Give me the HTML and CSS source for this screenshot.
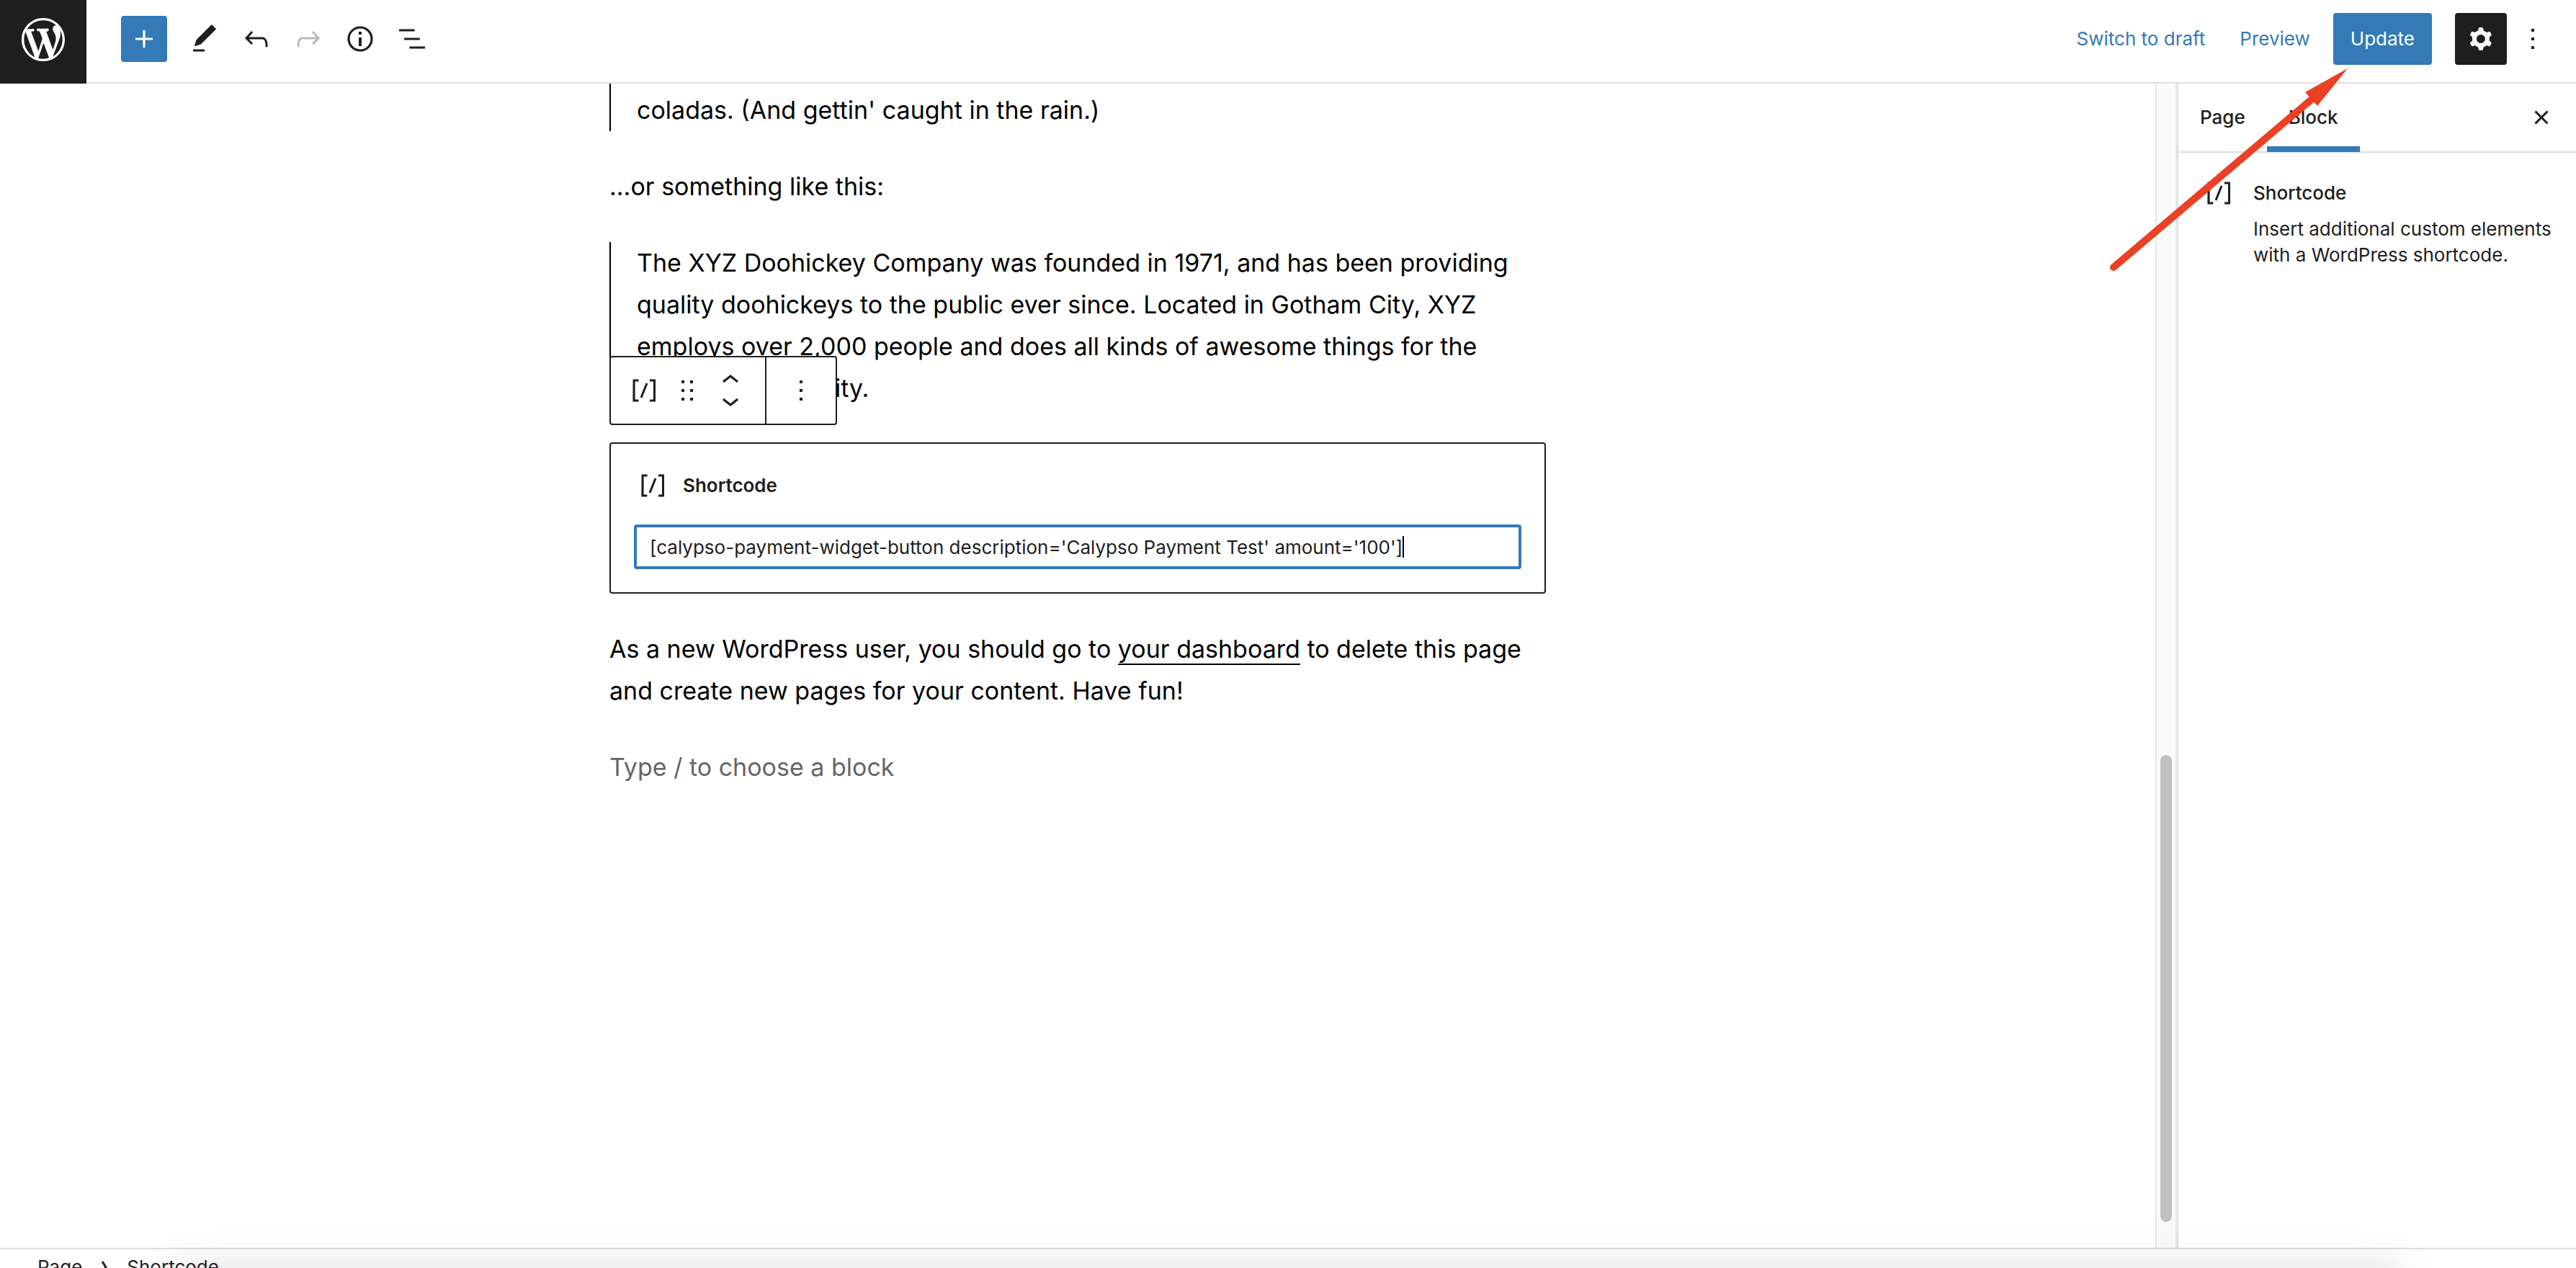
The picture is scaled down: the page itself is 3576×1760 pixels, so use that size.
FILE: index.html
```html
<!DOCTYPE html>
<html lang="en">
<head>
<meta charset="utf-8">
<title>Edit Page</title>
<link rel="stylesheet" href="styles.css">
</head>
<body>
<div class="app">
  <header class="header">
    <a class="logo" href="#" aria-label="View Pages"><svg class="logo-icon" viewBox="-2 -2 24 24"><path d="M20 10c0-5.51-4.49-10-10-10C4.48 0 0 4.49 0 10c0 5.52 4.48 10 10 10 5.51 0 10-4.48 10-10zM7.78 15.37L4.37 6.22c.55-.02 1.17-.08 1.17-.08.5-.06.44-1.13-.06-1.11 0 0-1.45.11-2.37.11-.18 0-.37 0-.58-.01C4.12 2.69 6.87 1.11 10 1.11c2.33 0 4.45.87 6.05 2.34-.68-.11-1.65.39-1.65 1.58 0 .74.45 1.36.9 2.1.35.61.55 1.36.55 2.46 0 1.49-1.4 5-1.4 5l-3.03-8.37c.54-.02.82-.17.82-.17.5-.05.44-1.25-.06-1.22 0 0-1.44.12-2.38.12-.87 0-2.33-.12-2.33-.12-.5-.03-.56 1.2-.06 1.22l.92.08 1.26 3.41zM17.41 10c.24-.64.74-1.87.43-4.25.7 1.29 1.05 2.71 1.05 4.25 0 3.29-1.73 6.24-4.4 7.78.97-2.59 1.94-5.2 2.92-7.78zM6.1 18.09C3.12 16.65 1.11 13.53 1.11 10c0-1.3.23-2.48.72-3.59C3.25 10.3 4.67 14.2 6.1 18.09zm4.03-6.63l2.58 6.98c-.86.29-1.76.45-2.71.45-.79 0-1.57-.11-2.29-.33.81-2.38 1.62-4.74 2.42-7.1z"/></svg></a>
    <div class="tools">
      <button class="icon-button inserter" aria-label="Add block"><svg class="icon" viewBox="0 0 24 24"><path d="M18 11.2h-5.2V6h-1.6v5.2H6v1.6h5.2V18h1.6v-5.2H18z"/></svg></button>
      <button class="icon-button" aria-label="Tools"><svg class="icon" viewBox="0 0 24 24"><path d="M20.1 5.1L16.9 2 6.2 12.7l-1.3 4.4 4.5-1.3L20.1 5.1zM4 20.8h8v-1.5H4v1.5z"/></svg></button>
      <button class="icon-button" aria-label="Undo"><svg class="icon" viewBox="0 0 24 24"><path d="M18.3 11.7c-.6-.6-1.4-.9-2.3-.9H6.7l2.9-3.3-1.1-1-4.5 5L8.5 16l1-1-2.7-2.7H16c.5 0 .9.2 1.3.5 1 1 1 3.4 1 4.5v.3h1.5v-.2c0-1.5 0-4.3-1.5-5.7z"/></svg></button>
      <button class="icon-button" aria-label="Redo" disabled><svg class="icon" viewBox="0 0 24 24"><path d="M15.6 6.5l-1.1 1 2.9 3.3H8c-.9 0-1.7.3-2.3.9-1.4 1.5-1.4 4.2-1.4 5.6v.2h1.5v-.3c0-1.1 0-3.5 1-4.5.3-.3.7-.5 1.3-.5h9.2L14.5 15l1.1 1.1 4.6-4.6-4.6-5z"/></svg></button>
      <button class="icon-button" aria-label="Details"><svg class="icon" viewBox="0 0 24 24"><path d="M12 3.2c-4.8 0-8.8 3.9-8.8 8.8 0 4.8 3.9 8.8 8.8 8.8 4.8 0 8.8-3.9 8.8-8.8 0-4.8-4-8.8-8.8-8.8zm0 16c-4 0-7.2-3.3-7.2-7.2C4.8 8 8 4.8 12 4.8s7.2 3.3 7.2 7.2c0 4-3.2 7.2-7.2 7.2zM11 17h2v-6h-2v6zm0-8h2V7h-2v2z"/></svg></button>
      <button class="icon-button" aria-label="List view"><svg class="icon" viewBox="0 0 24 24"><path d="M13.8 5.2H3v1.5h10.8V5.2zm-3.6 12v1.5H21v-1.5H10.2zm7.2-6H6.6v1.5h10.8v-1.5z"/></svg></button>
    </div>
    <div class="actions">
      <button class="text-button">Switch to draft</button>
      <button class="text-button">Preview</button>
      <button class="update">Update</button>
      <button class="icon-button settings" aria-label="Settings"><svg class="icon" viewBox="0 0 24 24"><path fill-rule="evenodd" d="M10.289 4.836A1 1 0 0111.275 4h1.306a1 1 0 01.987.836l.244 1.466c.787.26 1.503.679 2.108 1.218l1.393-.522a1 1 0 011.216.437l.653 1.13a1 1 0 01-.23 1.273l-1.148.944a6.025 6.025 0 010 2.435l1.149.946a1 1 0 01.23 1.272l-.653 1.13a1 1 0 01-1.216.437l-1.394-.522c-.605.54-1.32.958-2.108 1.218l-.244 1.466a1 1 0 01-.987.836h-1.306a1 1 0 01-.986-.836l-.244-1.466a5.995 5.995 0 01-2.108-1.218l-1.394.522a1 1 0 01-1.217-.436l-.653-1.131a1 1 0 01.23-1.272l1.149-.946a6.026 6.026 0 010-2.435l-1.148-.944a1 1 0 01-.23-1.272l.653-1.131a1 1 0 011.217-.437l1.393.522a5.994 5.994 0 012.108-1.218l.244-1.466zM14.929 12a3 3 0 11-6 0 3 3 0 016 0z"/></svg></button>
      <button class="icon-button" aria-label="Options"><svg class="icon" viewBox="0 0 24 24"><path d="M13 19h-2v-2h2v2zm0-6h-2v-2h2v2zm0-6h-2V5h2v2z"/></svg></button>
    </div>
  </header>

  <div class="workspace">
    <main class="canvas">
      <article class="content">
        <blockquote class="quote quote-first"><p>coladas. (And gettin' caught in the rain.)</p></blockquote>
        <p class="paragraph">...or something like this:</p>
        <blockquote class="quote"><p>The XYZ Doohickey Company was founded in 1971, and has been providing quality doohickeys to the public ever since. Located in Gotham City, XYZ employs over 2,000 people and does all kinds of awesome things for the Gotham community.</p></blockquote>
        <section class="shortcode">
          <div class="toolbar" role="toolbar" aria-label="Block tools">
            <div class="toolbar-main">
              <button class="icon-button" aria-label="Shortcode"><svg class="icon" viewBox="0 0 24 24"><path d="M16 4.2v1.5h2.5v12.5H16v1.5h4V4.2h-4zM4.2 19.8h4v-1.5H5.8V5.8h2.5V4.2h-4l-.1 15.6zm5.1-3.1l1.4.6 4-10-1.4-.6-4 10z"/></svg></button>
              <button class="drag" aria-label="Drag"><svg class="icon" viewBox="0 0 24 24"><path d="M8 7h2V5H8v2zm0 6h2v-2H8v2zm0 6h2v-2H8v2zm6-14v2h2V5h-2zm0 8h2v-2h-2v2zm0 6h2v-2h-2v2z"/></svg></button>
              <div class="movers">
                <button class="mover" aria-label="Move up"><svg class="icon" viewBox="0 0 24 24"><path d="M6.5 12.4L12 8l5.5 4.4-.9 1.2L12 10l-4.5 3.6-1-1.2z"/></svg></button>
                <button class="mover" aria-label="Move down"><svg class="icon" viewBox="0 0 24 24"><path d="M17.5 11.6L12 16l-5.5-4.4.9-1.2L12 14l4.5-3.6 1 1.2z"/></svg></button>
              </div>
            </div>
            <button class="toolbar-more" aria-label="Options"><svg class="icon" viewBox="0 0 24 24"><path d="M13 19h-2v-2h2v2zm0-6h-2v-2h2v2zm0-6h-2V5h2v2z"/></svg></button>
          </div>
          <label class="shortcode-label" for="shortcode-input"><svg class="icon" viewBox="0 0 24 24"><path d="M16 4.2v1.5h2.5v12.5H16v1.5h4V4.2h-4zM4.2 19.8h4v-1.5H5.8V5.8h2.5V4.2h-4l-.1 15.6zm5.1-3.1l1.4.6 4-10-1.4-.6-4 10z"/></svg>Shortcode</label>
          <div class="field">
            <input class="shortcode-input" id="shortcode-input" type="text" value="[calypso-payment-widget-button description='Calypso Payment Test' amount='100']">
            <span class="caret"></span>
          </div>
        </section>
        <p class="paragraph">As a new WordPress user, you should go to <a class="link" href="#">your dashboard</a> to delete this page and create new pages for your content. Have fun!</p>
        <p class="paragraph placeholder">Type / to choose a block</p>
      </article>
    </main>
    <div class="scrollbar"><div class="thumb"></div></div>
    <aside class="sidebar">
      <div class="tabs">
        <button class="tab">Page</button>
        <button class="tab tab-active">Block</button>
        <button class="icon-button close" aria-label="Close settings"><svg class="icon" viewBox="0 0 24 24"><path d="M12 13.06l3.712 3.713 1.061-1.06L13.061 12l3.712-3.712-1.06-1.06L12 10.938 8.288 7.227l-1.061 1.06L10.939 12l-3.712 3.712 1.06 1.061L12 13.061z"/></svg></button>
      </div>
      <div class="card">
        <svg class="icon" viewBox="0 0 24 24"><path d="M16 4.2v1.5h2.5v12.5H16v1.5h4V4.2h-4zM4.2 19.8h4v-1.5H5.8V5.8h2.5V4.2h-4l-.1 15.6zm5.1-3.1l1.4.6 4-10-1.4-.6-4 10z"/></svg>
        <div>
          <h2 class="card-title">Shortcode</h2>
          <p class="card-text">Insert additional custom elements with a WordPress shortcode.</p>
        </div>
      </div>
    </aside>
  </div>

  <footer class="footer">
    <a class="crumb" href="#">Page</a>
    <svg class="crumb-arrow" viewBox="0 0 10 20"><path d="M2 2l5 8-5 8"/></svg>
    <span>Shortcode</span>
  </footer>
  <div class="dock-shadow"></div>
  <svg class="pointer" viewBox="0 0 344 300"><path class="pointer-line" d="M14 286L290 52"/><path d="M339 10L280 43L297 62Z"/></svg>
</div>
</body>
</html>
```
FILE: styles.css
```css
* { box-sizing: border-box; }

body {
  margin: 0;
  background: #fff;
  color: #1e1e1e;
  font: 26px/36px Inter, "Liberation Sans", sans-serif;
}

button {
  margin: 0;
  padding: 0;
  border: 0;
  background: none;
  color: inherit;
  font: inherit;
  white-space: nowrap;
}

p, h2, blockquote { margin: 0; }

.app {
  position: relative;
  display: flex;
  flex-direction: column;
  height: 100vh;
  overflow: hidden;
}

.icon {
  display: block;
  flex: none;
  width: 48px;
  height: 48px;
  fill: currentColor;
}

.icon-button {
  display: flex;
  align-items: center;
  justify-content: center;
  width: 72px;
  height: 72px;
  border-radius: 4px;
}

.icon-button:disabled { color: #bbb; }

/* Top bar */
.header {
  display: flex;
  flex: none;
  height: 116px;
  border-bottom: 2px solid #e0e0e0;
}

.logo {
  display: flex;
  justify-content: center;
  width: 120px;
  height: 116px;
  padding-top: 19px;
  background: #1e1e1e;
  color: #fff;
}

.logo-icon {
  width: 72px;
  height: 72px;
  fill: currentColor;
}

.tools {
  display: flex;
  align-items: center;
  height: 108px;
  margin-left: 48px;
}

.inserter {
  width: 64px;
  height: 64px;
  margin-right: 16px;
  background: #337ab7;
  color: #fff;
}

.actions {
  display: flex;
  align-items: center;
  height: 108px;
  margin-left: auto;
  padding-right: 24px;
}

.text-button {
  padding: 0 24px;
  color: #337ab7;
}

.update {
  height: 72px;
  margin: 0 32px 0 8px;
  padding: 0 24px;
  border-radius: 4px;
  background: #337ab7;
  color: #fff;
}

.settings {
  background: #1e1e1e;
  color: #fff;
}

/* Editor */
.workspace {
  display: flex;
  flex: 1;
  min-height: 0;
}

.canvas {
  flex: 1;
  min-width: 0;
  overflow: hidden;
}

.content {
  display: flex;
  flex-direction: column;
  gap: 48px;
  max-width: 1300px;
  margin: 0 auto;
  color: #000;
  font-size: 34px;
  line-height: 58px;
}

.quote {
  padding-left: 36px;
  border-left: 2px solid #000;
}

.quote-first { padding-top: 8px; }

.link {
  border-bottom: 2px solid #000;
  color: inherit;
  text-decoration: none;
}

.placeholder { color: #666; }

.shortcode {
  position: relative;
  margin-top: -2px;
  padding: 32px;
  border: 2px solid #1e1e1e;
  border-radius: 4px;
  color: #1e1e1e;
  font-size: 26px;
  line-height: 36px;
}

.shortcode-label {
  display: flex;
  align-items: center;
  gap: 18px;
  height: 52px;
  margin-bottom: 28px;
  padding-left: 2px;
  font-weight: 600;
}

.field { position: relative; }

.shortcode-input {
  display: block;
  width: 100%;
  height: 62px;
  padding: 0 18px;
  border: 4px solid #337ab7;
  border-radius: 4px;
  outline: 0;
  background: #fff;
  color: inherit;
  font: inherit;
}

.caret {
  position: absolute;
  top: 16px;
  left: 1067px;
  width: 2px;
  height: 30px;
  background: #000;
}

/* Block toolbar, floating above the selected block */
.toolbar {
  position: absolute;
  bottom: calc(100% + 26px);
  left: -2px;
  display: flex;
  height: 96px;
  border: 2px solid #1e1e1e;
  border-radius: 4px;
  background: #fff;
}

.toolbar-main {
  display: flex;
  align-items: center;
  padding: 0 12px 0 10px;
  border-right: 2px solid #1e1e1e;
}

.mover {
  display: flex;
  align-items: center;
  justify-content: center;
  width: 72px;
  height: 28px;
}

.toolbar-more {
  display: flex;
  align-items: center;
  justify-content: center;
  width: 96px;
}

.scrollbar {
  display: flex;
  flex: none;
  flex-direction: column;
  justify-content: flex-end;
  align-items: center;
  width: 30px;
  padding-bottom: 36px;
  border: solid #e8e8e8;
  border-width: 0 2px;
  background: #fafafa;
}

.thumb {
  width: 16px;
  height: 41%;
  border-radius: 8px;
  background: #c1c1c1;
}

/* Settings sidebar */
.sidebar {
  flex: none;
  width: 554px;
  border-left: 2px solid #e0e0e0;
}

.tabs {
  display: flex;
  align-items: center;
  height: 96px;
  border-bottom: 2px solid #ddd;
}

.tab {
  height: 96px;
  padding: 0 30px;
  font-weight: 500;
}

.tab-active { box-shadow: inset 0 -8px #337ab7; }

.close { margin: 0 12px 0 auto; }

.card {
  display: flex;
  gap: 24px;
  padding: 32px;
  padding-right: 24px;
}

.card-title {
  margin-bottom: 8px;
  font-size: 26px;
  font-weight: 500;
  line-height: 48px;
}

/* Breadcrumb bar, partly below the fold */
.footer {
  display: flex;
  flex: none;
  align-items: flex-start;
  height: 28px;
  padding-left: 52px;
  border-top: 2px solid #ddd;
  line-height: 50px;
  overflow: hidden;
}

.crumb {
  color: inherit;
  text-decoration: none;
}

.crumb-arrow {
  width: 10px;
  height: 20px;
  margin: 15px 26px 0;
  fill: none;
  stroke: #1e1e1e;
  stroke-width: 3;
}

.dock-shadow {
  position: absolute;
  right: 256px;
  bottom: -20px;
  left: 256px;
  height: 20px;
  box-shadow: 0 10px 56px 10px rgba(0, 0, 0, 0.15);
}

/* Arrow pointing at the Update button */
.pointer {
  position: absolute;
  top: 85px;
  right: 312px;
  width: 344px;
  height: 300px;
  fill: #ec4025;
}

.pointer-line {
  stroke: #ec4025;
  stroke-width: 10;
  stroke-linecap: round;
}
```
